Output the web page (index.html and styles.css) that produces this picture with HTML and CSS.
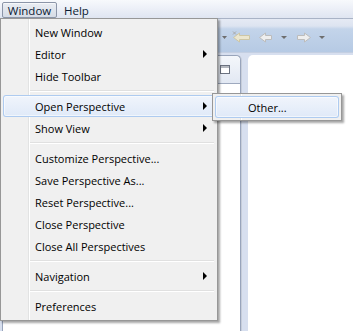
FILE: index.html
```html
<!DOCTYPE html>
<html lang="en">
<head>
    <meta charset="UTF-8">
    <meta name="viewport" content="width=device-width, initial-scale=1.0">
    <title>Window Menu</title>
    <link rel="stylesheet" href="styles.css">
</head>
<body>
    <div class="workbench-window">
        <div class="menubar">
            <span class="menu-title open">Window</span>
            <span class="menu-title">Help</span>
        </div>

        <div class="toolbar">
            <div class="tool-group">
                <svg class="tool drop" width="10" height="12" viewBox="0 0 10 12"><path d="M2 5h5l-2.5 3z" fill="#6e6e6e"/></svg>
                <svg class="tool" width="24" height="14" viewBox="0 0 24 14">
                    <path d="M3.5 7.5 9.5 3v2.5h10v4h-10V12z" fill="#ebe6cf" stroke="#cdc6a6"/>
                    <path d="M3 1.5l3 3M6 1.5l-3 3" stroke="#a9a9a9" stroke-width="1"/>
                </svg>
                <svg class="tool" width="22" height="14" viewBox="0 0 22 14"><path d="M5.5 7.5 11.5 3v2.5h6v4h-6V12z" fill="#eeeeee" stroke="#bcbcbc"/></svg>
                <svg class="tool drop" width="16" height="12" viewBox="0 0 16 12"><path d="M5 5h6l-3 3z" fill="#6e6e6e"/></svg>
                <svg class="tool" width="22" height="14" viewBox="0 0 22 14"><path d="M18.5 7.5 12.5 3v2.5h-7v4h7V12z" fill="#eeeeee" stroke="#bcbcbc"/></svg>
                <svg class="tool drop" width="16" height="12" viewBox="0 0 16 12"><path d="M5 5h6l-3 3z" fill="#6e6e6e"/></svg>
            </div>
        </div>

        <div class="workbench">
            <div class="view">
                <div class="view-head">
                    <svg width="10" height="9" viewBox="0 0 10 9"><rect x="0.5" y="0.5" width="9" height="8" fill="#fff" stroke="#6b7280"/><path d="M1 2h8" stroke="#6b7280"/></svg>
                </div>
                <div class="view-body"></div>
            </div>
            <div class="editor"></div>
        </div>

        <div class="dropdown">
            <div class="item">New Window</div>
            <div class="item has-sub">Editor</div>
            <div class="item">Hide Toolbar</div>
            <div class="sep"></div>
            <div class="item has-sub active">Open Perspective</div>
            <div class="item has-sub">Show View</div>
            <div class="sep"></div>
            <div class="item">Customize Perspective...</div>
            <div class="item">Save Perspective As...</div>
            <div class="item">Reset Perspective...</div>
            <div class="item">Close Perspective</div>
            <div class="item">Close All Perspectives</div>
            <div class="sep"></div>
            <div class="item has-sub">Navigation</div>
            <div class="sep"></div>
            <div class="item">Preferences</div>
        </div>

        <div class="dropdown submenu">
            <div class="item active">Other...</div>
        </div>
    </div>
</body>
</html>
```

FILE: styles.css
```css
html, body {
    margin: 0;
    height: 100%;
}

body {
    font-family: "Open Sans", "Noto Sans", sans-serif;
    font-size: 11px;
    color: #000;
    overflow: hidden;
}

.workbench-window {
    position: relative;
    height: 100%;
    display: flex;
    flex-direction: column;
    background: #d7dfef;
}

/* menu bar */
.menubar {
    display: flex;
    align-items: flex-start;
    padding: 2px 0 0 2px;
    box-sizing: border-box;
    height: 19px;
    background: linear-gradient(to bottom, #f7f9fc 0%, #eef1f8 40%, #dfe5f1 100%);
    border-bottom: 1px solid #a9b3c6;
}

.menu-title {
    height: 16px;
    line-height: 15px;
    padding: 0 6px;
    border: 1px solid transparent;
    box-sizing: border-box;
    color: #0b1a33;
    font-size: 11.5px;
}

.menu-title.open {
    width: 55px;
    text-align: center;
    padding: 0;
    border-color: #8b95a8;
    border-radius: 2px;
    background: linear-gradient(to bottom, #e9edf3, #d6dce6);
    box-shadow: inset 0 1px 0 rgba(255, 255, 255, 0.6);
}

/* toolbar */
.toolbar {
    height: 33px;
    display: flex;
    align-items: center;
    background: linear-gradient(to bottom, #e5eaf4 0px, #dde4f1 7px, #c3d4ea 10px, #b6cae4 100%);
    border-bottom: 1px solid #c4cfe2;
}

.tool-group {
    display: flex;
    align-items: center;
    margin-left: 220px;
    padding-top: 2px;
}

.tool {
    display: block;
}

/* views */
.workbench {
    flex: 1;
    display: flex;
    padding: 2px 0 0 2px;
    gap: 7px;
}

.view {
    width: 237px;
    display: flex;
    flex-direction: column;
    border: 1px solid #98a4bb;
    border-bottom: none;
    border-radius: 5px 5px 0 0;
    background: #fff;
    box-shadow: 1px 0 0 #c6cdda;
}

.view-head {
    height: 27px;
    display: flex;
    justify-content: flex-end;
    align-items: center;
    padding-right: 10px;
    background: linear-gradient(to bottom, #f4f7fb, #e2e8f3);
    border-bottom: 1px solid #9ea9be;
    border-radius: 5px 5px 0 0;
}

.view-body {
    flex: 1;
}

.editor {
    flex: 1;
    background: #fff;
    border-radius: 5px 0 0 0;
}

/* drop-down menus */
.dropdown {
    position: absolute;
    left: 0;
    top: 18px;
    width: 218px;
    box-sizing: border-box;
    padding: 2px 2px 3px;
    border: 1px solid #979797;
    background:
        linear-gradient(to right, transparent 27px, #e2e3e3 27px, #e2e3e3 28px, #fff 28px, #fff 29px, transparent 29px),
        #f0f0f0;
    box-shadow: 2px 2px 2px rgba(0, 0, 0, 0.35);
}

.item {
    height: 22px;
    line-height: 24px;
    padding-left: 32px;
    position: relative;
    border-radius: 3px;
    white-space: nowrap;
}

.item.has-sub::after {
    content: "";
    position: absolute;
    right: 8px;
    top: 7px;
    border-left: 4px solid #000;
    border-top: 4px solid transparent;
    border-bottom: 4px solid transparent;
}

.item.active {
    background: linear-gradient(to bottom, #f1f5fc, #dfe9f8);
    box-shadow: inset 0 0 0 1px #aecbf0, inset 0 0 0 2px rgba(255, 255, 255, 0.55);
}

.sep {
    height: 8px;
    margin-left: 27px;
    margin-right: 1px;
    background: linear-gradient(to bottom, transparent 3px, #e0e0e0 3px, #e0e0e0 4px, #fff 4px, #fff 5px, transparent 5px);
}

.submenu {
    left: 212px;
    top: 93px;
    width: 130px;
    padding: 2px;
}

.submenu .item {
    padding-left: 33px;
}
```
